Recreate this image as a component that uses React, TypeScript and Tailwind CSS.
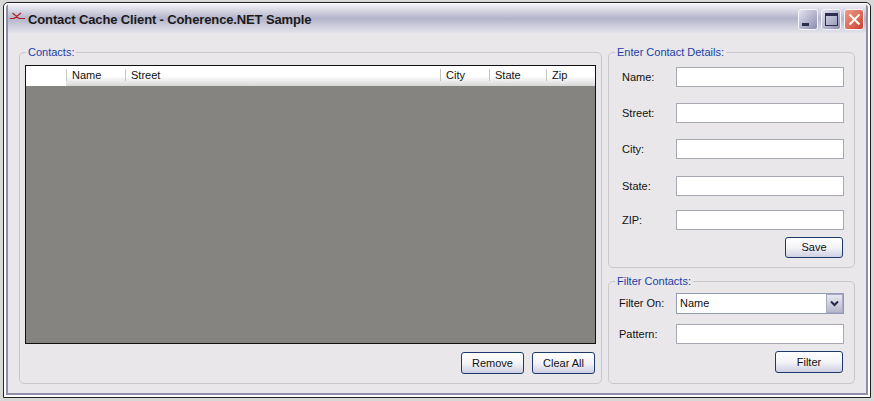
const FONT = "font-['Liberation_Sans',Arial,sans-serif]";

const BUTTON =
  "flex items-center justify-center rounded-[3px] border border-[#1c3b6b] bg-gradient-to-b from-white via-[#f4f4f8] to-[#cfcfe2] text-[11px] text-[#111]";

function Group({ title, className, children }: { title: string; className: string; children: React.ReactNode }) {
  return (
    <fieldset className={`rounded-[5px] border border-[#c9c7cc] px-[5px] ${className}`}>
      <legend className="ml-px px-[2px] text-[11px] leading-[14px] text-[#1a3fa8]">{title}</legend>
      {children}
    </fieldset>
  );
}

function Field({ label, rowClass }: { label: string; rowClass: string }) {
  return (
    <div className={`flex items-center ${rowClass}`}>
      <label className="w-[62px] pl-[8px] text-[11px] text-[#111]">{label}</label>
      <input className="h-[20px] w-[168px] border border-[#a9a9b4] bg-white" />
    </div>
  );
}

function TitleButton({ children, className }: { children: React.ReactNode; className: string }) {
  return (
    <div className={`flex h-[21px] w-[20px] items-center justify-center rounded-[3px] border border-[#f4f4f8] ${className}`}>
      {children}
    </div>
  );
}

export default function App() {
  const columns = [
    { name: "Name", w: "w-[59px]" },
    { name: "Street", w: "w-[315px]" },
    { name: "City", w: "w-[49px]" },
    { name: "State", w: "w-[57px]" },
    { name: "Zip", w: "w-[47px]" },
  ];

  return (
    <div className={`h-[401px] w-[874px] bg-[#d8d8d8] pt-[2px] pr-[3px] pb-[3px] pl-[3px] ${FONT}`}>
      <div className="flex h-[396px] flex-col rounded-t-[5px] border border-[#222] bg-white px-[2px] pt-px pb-[2px]">
        <div className="flex min-h-0 flex-1 flex-col rounded-t-[4px] border-x-2 border-b-2 border-[#8f8fab] bg-[#e9e7ea]">
          {/* title bar */}
          <div className="flex h-[29px] shrink-0 items-center bg-gradient-to-b from-[#f3f3f7] via-[#b4b4cc] to-[#e4e4ec] pr-[2px] pl-px">
            <svg width="17" height="8" viewBox="0 0 17 8" className="mb-[5px] shrink-0">
              <path d="M1 6.5 H5 L12 1 M3.5 1 L10 6.5 H16" stroke="#b01c1c" strokeWidth="1.2" fill="none" />
            </svg>
            <span className="mt-[2px] ml-[2px] text-[13px] font-bold tracking-[-0.13px] text-[#1a1a1a]">
              Contact Cache Client - Coherence.NET Sample
            </span>
            <div className="mt-[2px] ml-auto flex gap-[3px]">
              <TitleButton className="bg-gradient-to-br from-[#e4e4f0] to-[#8d8db0]">
                <div className="mt-[9px] mr-[5px] h-[3px] w-[7px] bg-[#2e2e50]" />
              </TitleButton>
              <TitleButton className="bg-gradient-to-br from-[#e4e4f0] to-[#8d8db0]">
                <div className="h-[13px] w-[13px] border border-t-[3px] border-[#2e2e50]" />
              </TitleButton>
              <TitleButton className="bg-gradient-to-br from-[#ee9c88] to-[#c8402e]">
                <svg width="13" height="13" viewBox="0 0 13 13">
                  <path d="M1.5 1.5 L11.5 11.5 M11.5 1.5 L1.5 11.5" stroke="#fff" strokeWidth="2" />
                </svg>
              </TitleButton>
            </div>
          </div>

          {/* body */}
          <div className="flex min-h-0 flex-1 gap-[6px] pt-[12px] pl-[11px]">
            <Group title="Contacts:" className="h-[339px] w-[583px]">
              <div className="mt-[6px] flex h-[279px] w-[571px] flex-col border border-[#111] bg-[#858481]">
                <div className="flex h-[20px] shrink-0 bg-gradient-to-b from-white via-white to-[#d8d8d8] text-[11px] text-[#111]">
                  <div className="w-[40px] bg-white" />
                  {columns.map((c) => (
                    <div key={c.name} className={`mt-[3px] mb-[5px] flex items-center border-l border-[#c4c4c4] pl-[5px] ${c.w}`}>
                      {c.name}
                    </div>
                  ))}
                </div>
              </div>
              <div className="mt-[8px] flex w-[570px] justify-end gap-[8px]">
                <button className={`${BUTTON} h-[22px] w-[63px]`}>Remove</button>
                <button className={`${BUTTON} h-[22px] w-[63px]`}>Clear All</button>
              </div>
            </Group>

            <div className="flex w-[247px] flex-col gap-[6px]">
              <Group title="Enter Contact Details:" className="h-[223px]">
                <div className="pt-[8px]">
                  <Field label="Name:" rowClass="mb-[16px]" />
                  <Field label="Street:" rowClass="mb-[16px]" />
                  <Field label="City:" rowClass="mb-[17px]" />
                  <Field label="State:" rowClass="mb-[14px]" />
                  <Field label="ZIP:" rowClass="" />
                </div>
                <div className="mt-[7px] flex justify-end pr-[6px]">
                  <button className={`${BUTTON} h-[21px] w-[58px]`}>Save</button>
                </div>
              </Group>
              <Group title="Filter Contacts:" className="h-[110px]">
                <div className="flex items-center pt-[5px]">
                  <label className="w-[62px] pl-[5px] text-[11px] text-[#111]">Filter On:</label>
                  <div className="flex h-[21px] w-[168px] items-center border border-[#8f9cb4] bg-white pl-[3px] text-[11px] text-[#111]">
                    Name
                    <div className="ml-auto flex h-[19px] w-[17px] items-center justify-center border border-[#a9a9c4] bg-gradient-to-b from-[#e8e8f0] to-[#b8b8cc]">
                      <svg width="9" height="7" viewBox="0 0 9 7">
                        <path d="M1 1.5 L4.5 5 L8 1.5" stroke="#26264a" strokeWidth="2" fill="none" />
                      </svg>
                    </div>
                  </div>
                </div>
                <div className="mt-[10px] flex items-center">
                  <label className="w-[62px] pl-[5px] text-[11px] text-[#111]">Pattern:</label>
                  <input className="h-[20px] w-[168px] border border-[#a9a9b4] bg-white" />
                </div>
                <div className="mt-[7px] flex justify-end pr-[6px]">
                  <button className={`${BUTTON} h-[22px] w-[68px]`}>Filter</button>
                </div>
              </Group>
            </div>
          </div>
        </div>
      </div>
    </div>
  );
}
